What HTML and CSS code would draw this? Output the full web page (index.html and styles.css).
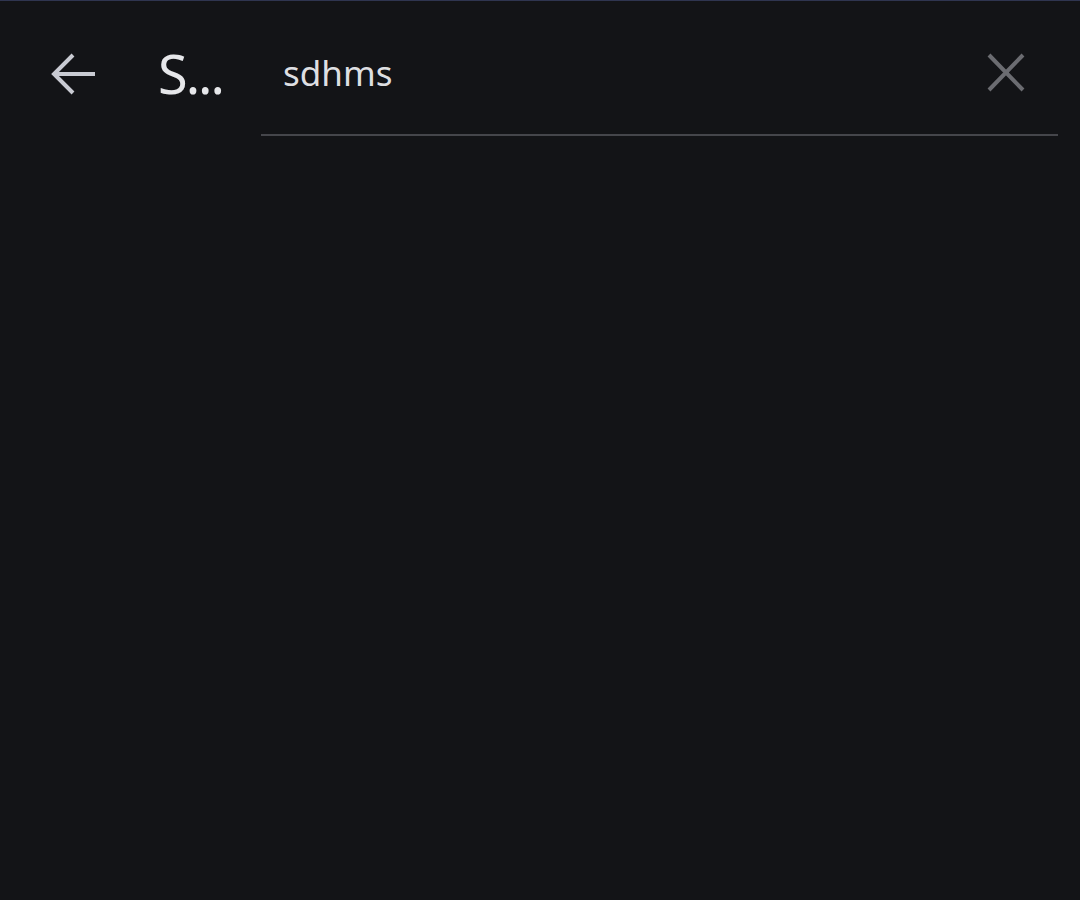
FILE: index.html
```html
<!DOCTYPE html>
<html lang="en">
<head>
<meta charset="utf-8">
<title>Search</title>
<link rel="stylesheet" href="styles.css">
</head>
<body>
<div class="app">
  <header class="header">
    <button class="back" aria-label="Back">
      <svg width="48" height="48" viewBox="0 0 48 48" fill="none" stroke="currentColor" stroke-width="4" stroke-linecap="butt" stroke-linejoin="miter">
        <path d="M45 24H5.5"/>
        <path d="M23 5L4 24l19 19"/>
      </svg>
    </button>
    <h1 class="title">S...</h1>
    <div class="field">
      <span class="query">sdhms</span>
      <button class="clear" aria-label="Clear">
        <svg width="48" height="48" viewBox="0 0 48 48" fill="none" stroke="currentColor" stroke-width="4">
          <path d="M7 6l34 35M41 6L7 41"/>
        </svg>
      </button>
    </div>
  </header>
</div>
</body>
</html>
```
FILE: styles.css
```css
* { box-sizing: border-box; }
html, body { margin: 0; height: 100%; }
body {
  background: #131417;
  font-family: "Noto Sans", "Open Sans", sans-serif;
}
.app {
  min-height: 100%;
  border-top: 1px solid #2f3550;
}
.header {
  display: flex;
  align-items: center;
  height: 135px;
  padding: 11px 22px 0 50px;
}
.back, .clear {
  flex: none;
  width: 48px;
  height: 48px;
  padding: 0;
  border: 0;
  background: none;
  display: flex;
}
.back { color: #c9cbd3; }
.clear { color: #6b6c71; margin-left: auto; }
.title {
  flex: none;
  width: 103px;
  margin: 0 0 0 60px;
  font-size: 54px;
  font-weight: 400;
  line-height: 1;
  letter-spacing: -2px;
  color: #e6e7ea;
  white-space: nowrap;
  padding-bottom: 2px;
}
.field {
  flex: 1;
  align-self: stretch;
  display: flex;
  align-items: center;
  padding: 0 28px 0 22px;
  border-bottom: 2px solid #45464b;
}
.query {
  font-size: 35px;
  color: #dedfe2;
  line-height: 1;
  padding-bottom: 2px;
}
```
